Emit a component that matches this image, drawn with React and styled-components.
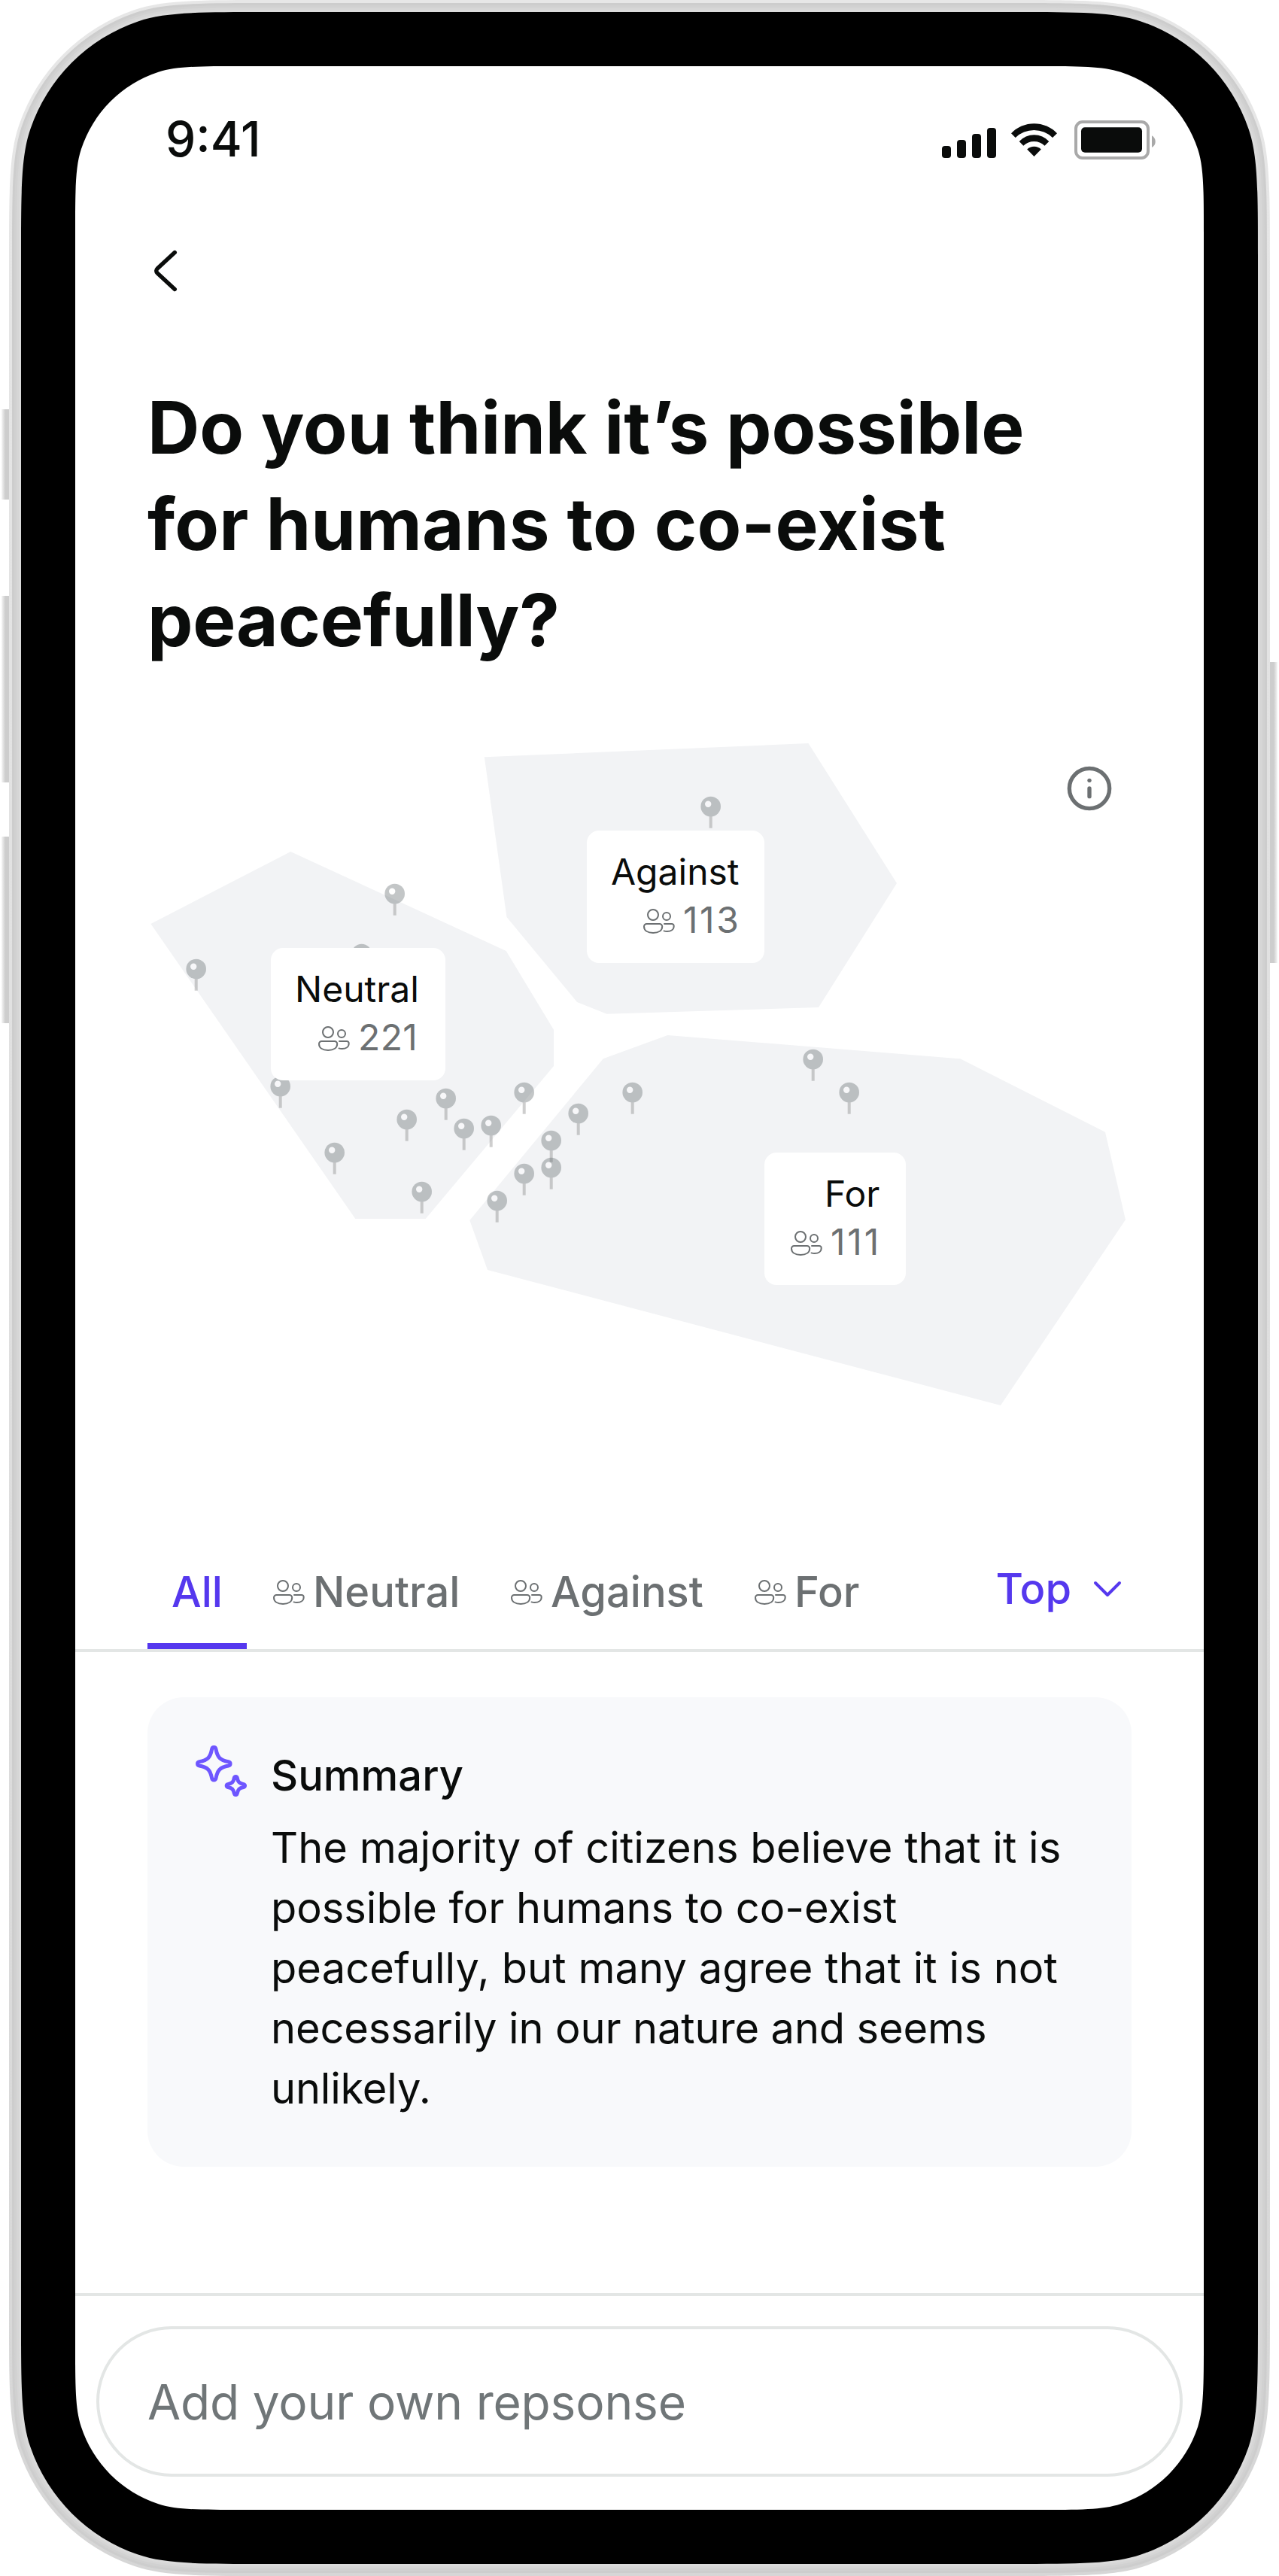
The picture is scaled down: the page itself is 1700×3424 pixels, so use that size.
import React from "react";
import styled, { createGlobalStyle } from "styled-components";
import { Info } from "lucide-react";

const ink = "#0a0c0b";
const muted = "#6c7072";
const line = "#e3e6e5";
const accent = "#5538ee";

const GlobalStyle = createGlobalStyle`
  *, *::before, *::after { box-sizing: border-box; }
  body {
    margin: 0;
    background: #fff;
    color: ${ink};
    font-family: Inter, "Liberation Sans", sans-serif;
    -webkit-font-smoothing: antialiased;
  }
  h1, h2, p { margin: 0; font-weight: inherit; font-size: inherit; }
  button, input { font: inherit; color: inherit; background: none; border: 0; padding: 0; margin: 0; }
`;

/* Rounded rectangle with continuous-curvature corners. */
function smoothRect(w, h, r, s) {
  const p = (1 + s) * r;
  const theta = (Math.PI / 4) * s;
  const arc = Math.sin((Math.PI / 4) * (1 - s)) * r * Math.SQRT2;
  const c = r * Math.tan(theta / 2) * Math.cos(theta);
  const d = c * Math.tan(theta);
  const b = (p - arc - c - d) / 3;
  const a = 2 * b;
  const n = (...v) => v.map((x) => x.toFixed(2)).join(" ");
  return [
    `M ${n(w - p, 0)}`,
    `c ${n(a, 0, a + b, 0, a + b + c, d)} a ${n(r, r)} 0 0 1 ${n(arc, arc)} c ${n(d, c, d, b + c, d, a + b + c)}`,
    `L ${n(w, h - p)}`,
    `c ${n(0, a, 0, a + b, -d, a + b + c)} a ${n(r, r)} 0 0 1 ${n(-arc, arc)} c ${n(-c, d, -(b + c), d, -(a + b + c), d)}`,
    `L ${n(p, h)}`,
    `c ${n(-a, 0, -(a + b), 0, -(a + b + c), -d)} a ${n(r, r)} 0 0 1 ${n(-arc, -arc)} c ${n(-d, -c, -d, -(b + c), -d, -(a + b + c))}`,
    `L ${n(0, p)}`,
    `c ${n(0, -a, 0, -(a + b), d, -(a + b + c))} a ${n(r, r)} 0 0 1 ${n(arc, -arc)} c ${n(c, -d, b + c, -d, a + b + c, -d)}`,
    "Z",
  ].join(" ");
}

const Stage = styled.div`
  position: relative;
  width: 1700px;
  height: 3424px;
  padding: 0 12px;
  overflow: hidden;
`;

const Shell = styled.div`
  width: ${(p) => p.$w}px;
  height: ${(p) => p.$h}px;
  padding: ${(p) => p.$pad}px;
  background: ${(p) => p.$fill};
  clip-path: path("${(p) => smoothRect(p.$w, p.$h, p.$r, p.$s)}");
`;

const SideKey = styled.span`
  position: absolute;
  top: ${(p) => p.$top}px;
  ${(p) => (p.$side === "left" ? "left: 2px;" : "left: 1688px;")}
  width: 10px;
  height: ${(p) => p.$h}px;
  background: linear-gradient(
    to ${(p) => (p.$side === "left" ? "right" : "left")},
    #f6f6f6,
    #cdcdcd 50%
  );
`;

const Screen = styled.main`
  width: 1500px;
  height: 3248px;
  display: flex;
  flex-direction: column;
  background: #fff;
  clip-path: path("${smoothRect(1500, 3248, 160, 0.4)}");
`;

const StatusBar = styled.header`
  display: flex;
  justify-content: space-between;
  height: 240px;
  padding: 57px 62px 0 120px;
`;

const Clock = styled.time`
  font-size: 64px;
  line-height: 80px;
  font-weight: 500;
`;

const StatusIcons = styled.svg`
  width: 286px;
  height: 56px;
  margin-top: 13px;
`;

const BackButton = styled.button`
  display: flex;
  width: 64px;
  height: 64px;
  margin-left: 96px;
`;

const Question = styled.h1`
  margin-top: 112px;
  padding: 0 96px;
  font-size: 96px;
  line-height: 128px;
  font-weight: 700;
`;

const TextLine = styled.span`
  display: block;
  white-space: nowrap;
  letter-spacing: ${(p) => p.$track}px;
`;

const Map = styled.section`
  position: relative;
  height: 1160px;
`;

const MapArt = styled.svg`
  display: block;
  width: 1500px;
  height: 1160px;
`;

const InfoButton = styled.button`
  position: absolute;
  left: 1316px;
  top: 128px;
  display: flex;
  color: ${muted};
`;

const RegionCard = styled.div`
  position: absolute;
  left: ${(p) => p.$x}px;
  top: ${(p) => p.$y}px;
  width: ${(p) => p.$w}px;
  height: 176px;
  padding: 23px 32px;
  display: flex;
  flex-direction: column;
  align-items: flex-end;
  border-radius: 16px;
  background: #fff;
  font-size: 48px;
  line-height: 64px;
  white-space: nowrap;
`;

const FixedLabel = styled.span`
  width: ${(p) => p.$w}px;
  text-align: left;
  letter-spacing: ${(p) => p.$track || 0}px;
`;

const Count = styled.span`
  display: flex;
  align-items: center;
  gap: 8px;
  color: ${muted};
  font-kerning: none;

  svg {
    margin-top: 2px;
  }
`;

const PeopleSvg = styled.svg`
  flex: none;
  width: 48px;
  height: 48px;
`;

const TabBar = styled.nav`
  display: flex;
  justify-content: space-between;
  align-items: flex-end;
  height: 148px;
  padding: 0 96px;
  border-bottom: 4px solid ${line};
  font-size: 56px;
  line-height: 72px;
  font-weight: 500;
`;

const Tabs = styled.div`
  display: flex;
`;

const Tab = styled.button`
  display: flex;
  align-items: center;
  gap: 8px;
  padding: 32px;
  border-bottom: 8px solid ${(p) => (p.$active ? accent : "transparent")};
  color: ${(p) => (p.$active ? accent : muted)};
  white-space: nowrap;
`;

const Sort = styled.button`
  display: flex;
  align-items: center;
  gap: 24px;
  margin: 0 8px 44px 0;
  color: ${accent};
`;

const SummaryCard = styled.article`
  display: flex;
  gap: 32px;
  margin: 60px 96px 0;
  padding: 64px;
  height: 624px;
  border-radius: 48px;
  background: #f8f9fb;
`;

const SummaryBody = styled.div`
  display: flex;
  flex-direction: column;
  gap: 16px;
  font-size: 56px;
  line-height: 80px;
`;

const SummaryTitle = styled.h2`
  font-weight: 500;
`;

const Footer = styled.footer`
  display: flex;
  margin-top: auto;
  padding: 40px 28px 44px;
  border-top: 4px solid ${line};
`;

const ReplyField = styled.div`
  flex: 1;
  display: flex;
  align-items: center;
  height: 200px;
  padding: 0 64px;
  border: 4px solid ${line};
  border-radius: 100px;
  font-size: 64px;
  letter-spacing: -0.18px;
  color: #707678;
`;

const shells = [
  { pad: 4, fill: "linear-gradient(#e7e7e7, #dfdfdf 50%, #d6d6d6)" },
  { pad: 3, fill: "#cdcdcd" },
  { pad: 3, fill: "#d1d1d1" },
  { pad: 3, fill: "#d6d6d6" },
  { pad: 3, fill: "#dbdbdb" },
  { pad: 72, fill: "#000" },
];

function Device({ children }) {
  let inset = 16;
  return [...shells].reverse().reduce((inner, shell, i) => {
    if (i > 0) inset -= shell.pad;
    return (
      <Shell
        $w={1676 - inset * 2}
        $h={3424 - inset * 2}
        $pad={shell.pad}
        $fill={shell.fill}
        $r={246 - inset}
        $s={0.42}
      >
        {inner}
      </Shell>
    );
  }, children);
}

function People() {
  return (
    <PeopleSvg viewBox="0 0 48 48" fill="none" stroke="currentColor" strokeWidth="2" strokeLinecap="round" strokeLinejoin="round">
      <circle cx="16" cy="16" r="7" />
      <circle cx="34" cy="18" r="5" />
      <path d="M7.6 28H24.6a3.5 3.5 0 0 1 3.6 3.5C28.2 36.8 23.4 40 16.1 40S4 36.8 4 31.5A3.5 3.5 0 0 1 7.6 28Z" />
      <path d="M31 28h9.8a2.8 2.8 0 0 1 2.9 2.9c0 4.6-4 7.1-9 7.1-1.6 0-2.9-.2-4.2-.6" />
    </PeopleSvg>
  );
}

const pins = [
  [944, 1072], [524, 1188], [480, 1268], [260, 1288], [372, 1444],
  [540, 1488], [592, 1460], [616, 1500], [652, 1496], [696, 1452],
  [444, 1532], [560, 1584], [660, 1596], [696, 1560], [732, 1516],
  [732, 1552], [768, 1480], [840, 1452], [1080, 1408], [1128, 1452],
];

const regions = [
  "643.8,1006.3 1074.5,988 1192,1174 1088,1339 806.5,1347.7 767,1332 673.5,1219",
  "200.4,1228 386.3,1132 672.7,1264 736,1368.7 736,1417 565.7,1620 472.3,1620",
  "624.3,1622 801.7,1407.3 887.4,1376 1276.3,1407.3 1469,1504.7 1496,1621.3 1330,1868 648,1688",
];

function Pin({ x, y }) {
  return (
    <g transform={`translate(${x + 0.7} ${y})`} opacity="0.4">
      <path d="M0 12V28.7" stroke="#868686" strokeWidth="4" />
      <circle r="13.3" fill="#6a7275" />
      <circle cx="-3.5" cy="-3.3" r="4.2" fill="#fff" />
    </g>
  );
}

const cards = [
  { name: "Against", count: 113, x: 680, y: 216, w: 236, nameW: 172, countW: 76, track: 2.6 },
  { name: "Neutral", count: 221, x: 260, y: 372, w: 232, nameW: 168, countW: 84, track: 0.4 },
  { name: "For", count: 111, x: 916, y: 644, w: 188, nameW: 76, countW: 68, track: 2.8 },
];

const tabs = [
  { name: "Neutral", w: 196 },
  { name: "Against", w: 204 },
  { name: "For", w: 84 },
];

const question = [
  { text: "Do you think it’s possible", track: -0.04 },
  { text: "for humans to co-exist", track: 0.14 },
  { text: "peacefully?", track: -0.27 },
];

const summary = [
  { text: "The majority of citizens believe that it is", track: 0.05 },
  { text: "possible for humans to co-exist", track: -0.03 },
  { text: "peacefully, but many agree that it is not", track: 0.08 },
  { text: "necessarily in our nature and seems", track: -0.13 },
  { text: "unlikely.", track: -0.2 },
];

export default function App() {
  return (
    <>
      <GlobalStyle />
      <Stage>
        <SideKey $side="left" $top={544} $h={120} />
        <SideKey $side="left" $top={792} $h={248} />
        <SideKey $side="left" $top={1112} $h={248} />
        <SideKey $side="right" $top={880} $h={400} />
        <Device>
          <Screen>
            <StatusBar>
              <Clock>9:41</Clock>
              <StatusIcons viewBox="1252 158 286 56" fill={ink}>
                <rect x="1252" y="194" width="12" height="16" rx="4" />
                <rect x="1272" y="186" width="12" height="24" rx="4" />
                <rect x="1292" y="178" width="12" height="32" rx="4" />
                <rect x="1312" y="170" width="12" height="40" rx="4" />
                <path d="M1344 177.3A42 42 0 0 1 1405 177.3L1399 183A35.3 35.3 0 0 0 1349.7 183Z" />
                <path d="M1354.7 188A27 27 0 0 1 1394.3 188L1388.5 193.7A20.5 20.5 0 0 0 1360.3 193.7Z" />
                <path d="M1365.2 198.5A13.5 13.5 0 0 1 1383.8 198.5L1374.5 207.9Z" />
                <rect x="1430" y="162" width="96" height="48" rx="9" fill="none" stroke="#a9a9a9" strokeWidth="4" />
                <rect x="1437" y="169.3" width="81" height="33.4" rx="5" />
                <path d="M1531 180.3C1537.3 183.5 1537.3 193 1531 196Z" fill="#a9a9a9" />
              </StatusIcons>
            </StatusBar>
            <BackButton aria-label="Back">
              <svg width="64" height="64" viewBox="196 328 64 64" fill="none" stroke={ink} strokeWidth="5.4" strokeLinecap="round">
                <path d="M232.3 335.5L209.4 356.7Q206 360 209.4 363.3L232.3 384.4" />
              </svg>
            </BackButton>
            <Question>
              {question.map(({ text, track }) => (
                <TextLine key={text} $track={track}>
                  {text}
                </TextLine>
              ))}
            </Question>
            <Map>
              <MapArt viewBox="100 888 1500 1160">
                {regions.map((points) => (
                  <polygon key={points} points={points} fill="#f2f3f5" />
                ))}
                {pins.map(([x, y]) => (
                  <Pin key={`${x}-${y}`} x={x} y={y} />
                ))}
              </MapArt>
              {cards.map((c) => (
                <RegionCard key={c.name} $x={c.x} $y={c.y} $w={c.w}>
                  <FixedLabel $w={c.nameW}>{c.name}</FixedLabel>
                  <Count>
                    <People />
                    <FixedLabel $w={c.countW} $track={c.track}>
                      {c.count}
                    </FixedLabel>
                  </Count>
                </RegionCard>
              ))}
              <InfoButton aria-label="About this map">
                <Info size={64} strokeWidth={2} />
              </InfoButton>
            </Map>
            <TabBar>
              <Tabs>
                <Tab $active>
                  <FixedLabel $w={68}>All</FixedLabel>
                </Tab>
                {tabs.map((t) => (
                  <Tab key={t.name}>
                    <People />
                    <FixedLabel $w={t.w}>{t.name}</FixedLabel>
                  </Tab>
                ))}
              </Tabs>
              <Sort>
                Top
                <svg width="48" height="48" viewBox="0 0 48 48" fill="none" stroke="currentColor" strokeWidth="4" strokeLinecap="round" strokeLinejoin="round">
                  <path d="M8 16L24 32L40 16" />
                </svg>
              </Sort>
            </TabBar>
            <SummaryCard>
              <svg width="68" height="68" viewBox="0 0 68 68" fill="none" stroke="#6e56ff" strokeWidth="5" strokeLinejoin="round">
                <path d="M21.6 5C22.3 1.7 26.3 1.7 27 5C29 16 32.6 19.6 43.6 21.6C46.9 22.3 46.9 26.3 43.6 27C32.6 29 29 32.6 27 43.6C26.3 46.9 22.3 46.9 21.6 43.6C19.6 32.6 16 29 5 27C1.7 26.3 1.7 22.3 5 21.6C16 19.6 19.6 16 21.6 5Z" />
                <path d="M51.3 43.2C51.9 40.9 54.7 40.9 55.3 43.2C56.3 48.6 58.2 50.6 63.8 51.6C66.1 52.2 66.1 54.9 63.8 55.5C58.2 56.5 56.3 58.5 55.3 63.9C54.7 66.2 51.9 66.2 51.3 63.9C50.3 58.5 48.4 56.5 42.9 55.5C40.6 54.9 40.6 52.2 42.9 51.6C48.4 50.6 50.3 48.6 51.3 43.2Z" />
              </svg>
              <SummaryBody>
                <SummaryTitle>Summary</SummaryTitle>
                <p>
                  {summary.map(({ text, track }) => (
                    <TextLine key={text} $track={track}>
                      {text}
                    </TextLine>
                  ))}
                </p>
              </SummaryBody>
            </SummaryCard>
            <Footer>
              <ReplyField>Add your own repsonse</ReplyField>
            </Footer>
          </Screen>
        </Device>
      </Stage>
    </>
  );
}
